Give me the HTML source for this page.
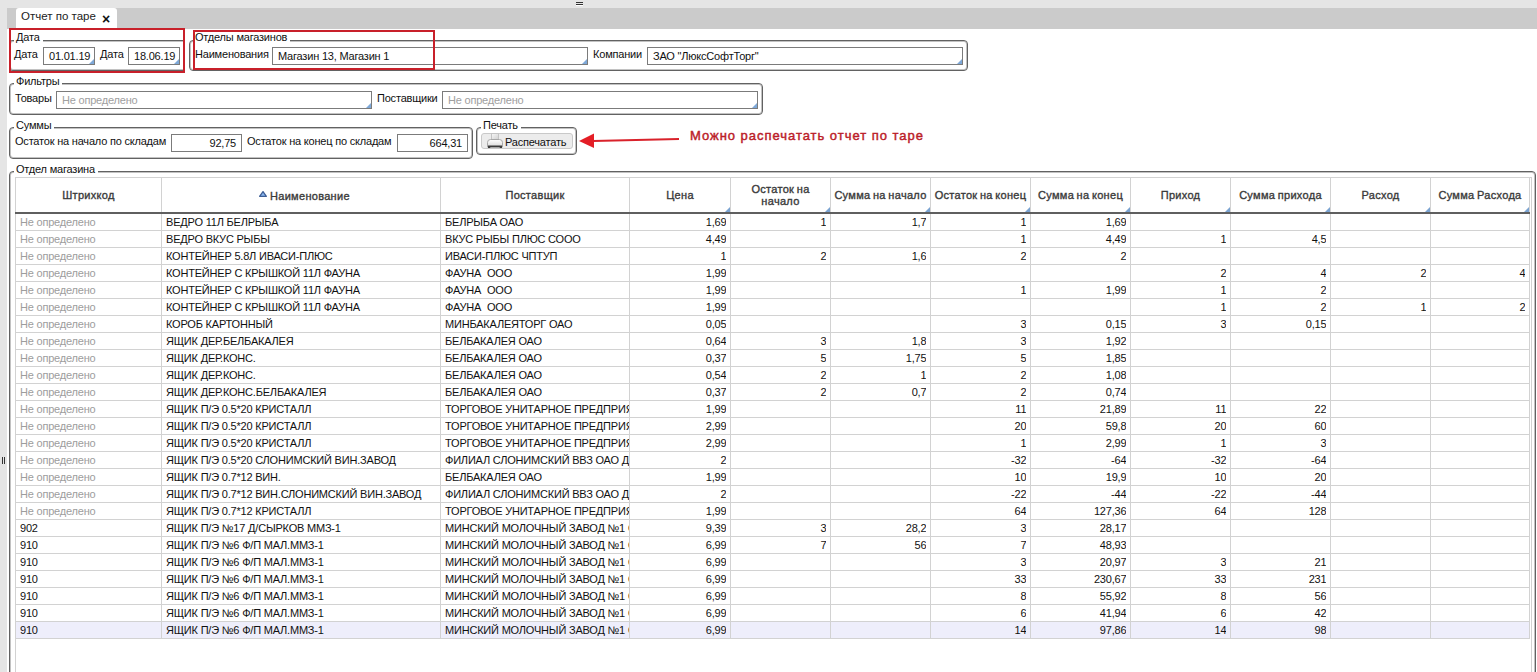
<!DOCTYPE html><html><head><meta charset="utf-8"><style>

*{box-sizing:border-box}
html,body{margin:0;padding:0}
body{width:1537px;height:672px;position:relative;overflow:hidden;background:#fff;font-family:"Liberation Sans",sans-serif;font-size:11px;color:#111;letter-spacing:-0.2px}
.ab{position:absolute}
.fs{position:absolute;border:1px solid #626262;border-radius:4px;box-shadow:inset 0 0 0 1px #c2c2c2}
.lg{position:absolute;background:#fff;padding:0 3px 0 2px;line-height:13px;color:#111}
.lb{position:absolute;line-height:13px;white-space:nowrap;color:#111}
.in{position:absolute;border:1px solid #7b7b7b;height:18px;background:#fff;line-height:16px;padding:0 5px;white-space:nowrap;overflow:hidden;color:#111}
.in.ph{color:#a0a0a0}
.tri{position:absolute;right:0;bottom:0;width:0;height:0;border-left:5px solid transparent;border-bottom:5px solid #7ea8d8}
.red{position:absolute;border:2px solid #c8202a}
.hl{position:absolute;height:1px;background:#d2d2d2}
.vl{position:absolute;width:1px;background:#d2d2d2}
.c{position:absolute;height:16px;line-height:16px;white-space:nowrap;overflow:hidden;color:#111}
.g{color:#9d9d9d}
.hd{position:absolute;color:#3a3a3a;text-align:center;line-height:12px;white-space:nowrap;letter-spacing:0.3px;word-spacing:-0.8px;-webkit-text-stroke:0.35px #3a3a3a}
.htri{position:absolute;width:0;height:0;border-left:5px solid transparent;border-bottom:5px solid #7aa3d1}

</style></head><body>
<div class="ab" style="left:0;top:0;width:1537px;height:8px;background:#e5e5e5"></div>
<div class="ab" style="left:576px;top:2px;width:7px;height:1px;background:#333"></div>
<div class="ab" style="left:576px;top:4px;width:7px;height:1px;background:#333"></div>
<div class="ab" style="left:576px;top:5px;width:7px;height:1px;background:#fff"></div>
<div class="ab" style="left:0;top:0;width:7px;height:672px;background:#e5e5e5"></div>
<div class="ab" style="left:2px;top:457px;width:1px;height:7px;background:#333"></div>
<div class="ab" style="left:4px;top:457px;width:1px;height:7px;background:#333"></div>
<div class="ab" style="left:7px;top:8px;width:1530px;height:21px;background:#cbcbcb"></div>
<div class="ab" style="left:16px;top:8px;width:101px;height:21px;background:#fff;border-radius:3px 3px 0 0"></div>
<div class="lb" style="left:21px;top:10px;font-size:11.5px;color:#222;letter-spacing:0">Отчет по таре</div>
<div class="lb" style="left:102px;top:12.5px;font-size:14px;font-weight:bold;color:#111">×</div>
<div class="fs" style="left:9px;top:40px;width:176px;height:31px;border-right:none;border-radius:4px 0 0 4px"></div>
<div class="lg" style="left:14px;top:31px">Дата</div>
<div class="lb" style="left:14px;top:48px">Дата</div>
<div class="in" style="left:43px;top:47px;width:52px;text-align:left">01.01.19<div class="tri"></div></div>
<div class="lb" style="left:100px;top:48px">Дата</div>
<div class="in" style="left:128px;top:47px;width:52px;text-align:left">18.06.19<div class="tri"></div></div>
<div class="fs" style="left:189px;top:40px;width:779px;height:31px;"></div>
<div class="lg" style="left:193px;top:31px">Отделы магазинов</div>
<div class="lb" style="left:195px;top:48px">Наименования</div>
<div class="in" style="left:272px;top:47px;width:316px;text-align:left">Магазин 13, Магазин 1<div class="tri"></div></div>
<div class="lb" style="left:593px;top:48px">Компании</div>
<div class="in" style="left:647px;top:47px;width:316px;text-align:left">ЗАО "ЛюксСофтТорг"<div class="tri"></div></div>
<div class="fs" style="left:9px;top:83px;width:754px;height:32px;"></div>
<div class="lg" style="left:14px;top:75px">Фильтры</div>
<div class="lb" style="left:15px;top:92px">Товары</div>
<div class="in ph" style="left:56px;top:91px;width:316px;text-align:left">Не определено<div class="tri"></div></div>
<div class="lb" style="left:377px;top:92px">Поставщики</div>
<div class="in ph" style="left:442px;top:91px;width:316px;text-align:left">Не определено<div class="tri"></div></div>
<div class="fs" style="left:9px;top:127px;width:464px;height:32px;"></div>
<div class="lg" style="left:14px;top:119px">Суммы</div>
<div class="lb" style="left:15px;top:135px">Остаток на начало по складам</div>
<div class="in" style="left:171px;top:134px;width:71px;text-align:right">92,75</div>
<div class="lb" style="left:247px;top:135px">Остаток на конец по складам</div>
<div class="in" style="left:397px;top:134px;width:71px;text-align:right">664,31</div>
<div class="fs" style="left:476px;top:127px;width:101px;height:28px;"></div>
<div class="lg" style="left:481px;top:119px">Печать</div>
<div class="ab" style="left:481px;top:133px;width:92px;height:16px;border:1px solid #c9c9c9;border-radius:3px;background:#ececec"></div>
<svg class="ab" style="left:486px;top:133px" width="18" height="16" viewBox="0 0 18 16">
<defs><linearGradient id="pg" x1="0" y1="0" x2="0" y2="1"><stop offset="0" stop-color="#ffffff"/><stop offset="1" stop-color="#d8d8d8"/></linearGradient>
<linearGradient id="pp" x1="0" y1="0" x2="1" y2="1"><stop offset="0" stop-color="#f8f8f8"/><stop offset="1" stop-color="#d0d0d0"/></linearGradient></defs>
<rect x="5.5" y="0.5" width="7" height="6" fill="url(#pp)" stroke="#c4c4c4" stroke-width="1"/>
<path d="M1.5 14 L1.5 9.5 Q1.5 6.5 4.5 6.5 L13.5 6.5 Q16.5 6.5 16.5 9.5 L16.5 14 Z" fill="url(#pg)" stroke="#a8a8a8" stroke-width="1"/>
<path d="M2 12.5 L16 12.5 L16 15 L14 15 L13.5 14.2 L4.5 14.2 L4 15 L2 15 Z" fill="#3c3c3c"/>
</svg>
<div class="lb" style="left:505px;top:136px">Распечатать</div>
<div class="fs" style="left:9px;top:171px;width:1527px;height:530px;"></div>
<div class="lg" style="left:14px;top:163px">Отдел магазина</div>
<div class="red" style="left:9px;top:28px;width:176px;height:45px"></div>
<div class="red" style="left:193px;top:30px;width:242px;height:40px"></div>
<svg class="ab" style="left:575px;top:128px" width="110" height="24" viewBox="0 0 110 24">
<path d="M18 13 L104 11" stroke="#d9222b" stroke-width="2.2" fill="none"/>
<path d="M4 13 L19 5.5 L19 20 Z" fill="#e41e26"/>
</svg>
<div class="lb" style="left:690px;top:129px;font-size:13px;font-weight:normal;color:#bb1d29;letter-spacing:0.97px;-webkit-text-stroke:0.45px #bb1d29">Можно распечатать отчет по таре</div>
<div class="ab" style="left:16px;top:622px;width:1513px;height:16px;background:#eeeefb"></div>
<div class="hl" style="left:15px;top:177px;width:1517px"></div>
<div class="vl" style="left:1531px;top:177px;height:495px"></div>
<div class="vl" style="left:15px;top:177px;height:495px"></div>
<div class="vl" style="left:161px;top:177px;height:462px"></div>
<div class="vl" style="left:440px;top:177px;height:462px"></div>
<div class="vl" style="left:629px;top:177px;height:462px"></div>
<div class="vl" style="left:730px;top:177px;height:462px"></div>
<div class="vl" style="left:830px;top:177px;height:462px"></div>
<div class="vl" style="left:930px;top:177px;height:462px"></div>
<div class="vl" style="left:1030px;top:177px;height:462px"></div>
<div class="vl" style="left:1130px;top:177px;height:462px"></div>
<div class="vl" style="left:1230px;top:177px;height:462px"></div>
<div class="vl" style="left:1330px;top:177px;height:462px"></div>
<div class="vl" style="left:1430px;top:177px;height:462px"></div>
<div class="vl" style="left:1529px;top:177px;height:462px"></div>
<div class="ab" style="left:15px;top:212px;width:1515px;height:2px;background:#5f5f5f"></div>
<div class="hl" style="left:15px;top:230px;width:1515px"></div>
<div class="hl" style="left:15px;top:247px;width:1515px"></div>
<div class="hl" style="left:15px;top:264px;width:1515px"></div>
<div class="hl" style="left:15px;top:281px;width:1515px"></div>
<div class="hl" style="left:15px;top:298px;width:1515px"></div>
<div class="hl" style="left:15px;top:315px;width:1515px"></div>
<div class="hl" style="left:15px;top:332px;width:1515px"></div>
<div class="hl" style="left:15px;top:349px;width:1515px"></div>
<div class="hl" style="left:15px;top:366px;width:1515px"></div>
<div class="hl" style="left:15px;top:383px;width:1515px"></div>
<div class="hl" style="left:15px;top:400px;width:1515px"></div>
<div class="hl" style="left:15px;top:417px;width:1515px"></div>
<div class="hl" style="left:15px;top:434px;width:1515px"></div>
<div class="hl" style="left:15px;top:451px;width:1515px"></div>
<div class="hl" style="left:15px;top:468px;width:1515px"></div>
<div class="hl" style="left:15px;top:485px;width:1515px"></div>
<div class="hl" style="left:15px;top:502px;width:1515px"></div>
<div class="hl" style="left:15px;top:519px;width:1515px"></div>
<div class="hl" style="left:15px;top:536px;width:1515px"></div>
<div class="hl" style="left:15px;top:553px;width:1515px"></div>
<div class="hl" style="left:15px;top:570px;width:1515px"></div>
<div class="hl" style="left:15px;top:587px;width:1515px"></div>
<div class="hl" style="left:15px;top:604px;width:1515px"></div>
<div class="hl" style="left:15px;top:621px;width:1515px"></div>
<div class="hl" style="left:15px;top:638px;width:1515px"></div>
<div class="hd" style="left:16px;top:189px;width:145px;font-weight:normal">Штрихкод</div>
<div class="hd" style="left:270px;top:190px;text-align:left;font-weight:normal">Наименование</div>
<div class="hd" style="left:441px;top:189px;width:188px;font-weight:normal">Поставщик</div>
<div class="hd" style="left:630px;top:189px;width:100px;font-weight:normal">Цена</div>
<div class="htri" style="left:725px;top:207px"></div>
<div class="hd" style="left:731px;top:183px;width:99px;font-weight:normal">Остаток на<br>начало</div>
<div class="htri" style="left:825px;top:207px"></div>
<div class="hd" style="left:831px;top:189px;width:99px;font-weight:normal">Сумма на начало</div>
<div class="htri" style="left:925px;top:207px"></div>
<div class="hd" style="left:931px;top:189px;width:99px;font-weight:normal">Остаток на конец</div>
<div class="htri" style="left:1025px;top:207px"></div>
<div class="hd" style="left:1031px;top:189px;width:99px;font-weight:normal">Сумма на конец</div>
<div class="htri" style="left:1125px;top:207px"></div>
<div class="hd" style="left:1131px;top:189px;width:99px;font-weight:normal">Приход</div>
<div class="htri" style="left:1225px;top:207px"></div>
<div class="hd" style="left:1231px;top:189px;width:99px;font-weight:normal">Сумма прихода</div>
<div class="htri" style="left:1325px;top:207px"></div>
<div class="hd" style="left:1331px;top:189px;width:99px;font-weight:normal">Расход</div>
<div class="htri" style="left:1425px;top:207px"></div>
<div class="hd" style="left:1431px;top:189px;width:98px;font-weight:normal">Сумма Расхода</div>
<div class="htri" style="left:1524px;top:207px"></div>
<svg class="ab" style="left:258px;top:190px" width="10" height="8" viewBox="0 0 10 8"><path d="M1.6 6.3 L5 1.6 L8.4 6.3 Z" fill="#8ab6ee" stroke="#3f5f96" stroke-width="1.3" stroke-linejoin="round"/></svg>
<div class="c g" style="left:20px;top:214px;width:141px">Не определено</div>
<div class="c" style="left:166px;top:214px;width:274px">ВЕДРО 11Л БЕЛРЫБА</div>
<div class="c" style="left:445px;top:214px;width:184px">БЕЛРЫБА ОАО</div>
<div class="c" style="left:630px;top:214px;width:96.4px;text-align:right">1,69</div>
<div class="c" style="left:731px;top:214px;width:95.4px;text-align:right">1</div>
<div class="c" style="left:831px;top:214px;width:95.4px;text-align:right">1,7</div>
<div class="c" style="left:931px;top:214px;width:95.4px;text-align:right">1</div>
<div class="c" style="left:1031px;top:214px;width:95.4px;text-align:right">1,69</div>
<div class="c g" style="left:20px;top:231px;width:141px">Не определено</div>
<div class="c" style="left:166px;top:231px;width:274px">ВЕДРО ВКУС РЫБЫ</div>
<div class="c" style="left:445px;top:231px;width:184px">ВКУС РЫБЫ ПЛЮС СООО</div>
<div class="c" style="left:630px;top:231px;width:96.4px;text-align:right">4,49</div>
<div class="c" style="left:931px;top:231px;width:95.4px;text-align:right">1</div>
<div class="c" style="left:1031px;top:231px;width:95.4px;text-align:right">4,49</div>
<div class="c" style="left:1131px;top:231px;width:95.4px;text-align:right">1</div>
<div class="c" style="left:1231px;top:231px;width:95.4px;text-align:right">4,5</div>
<div class="c g" style="left:20px;top:248px;width:141px">Не определено</div>
<div class="c" style="left:166px;top:248px;width:274px">КОНТЕЙНЕР 5.8Л ИВАСИ-ПЛЮС</div>
<div class="c" style="left:445px;top:248px;width:184px">ИВАСИ-ПЛЮС ЧПТУП</div>
<div class="c" style="left:630px;top:248px;width:96.4px;text-align:right">1</div>
<div class="c" style="left:731px;top:248px;width:95.4px;text-align:right">2</div>
<div class="c" style="left:831px;top:248px;width:95.4px;text-align:right">1,6</div>
<div class="c" style="left:931px;top:248px;width:95.4px;text-align:right">2</div>
<div class="c" style="left:1031px;top:248px;width:95.4px;text-align:right">2</div>
<div class="c g" style="left:20px;top:265px;width:141px">Не определено</div>
<div class="c" style="left:166px;top:265px;width:274px">КОНТЕЙНЕР С КРЫШКОЙ 11Л ФАУНА</div>
<div class="c" style="left:445px;top:265px;width:184px">ФАУНА&nbsp; ООО</div>
<div class="c" style="left:630px;top:265px;width:96.4px;text-align:right">1,99</div>
<div class="c" style="left:1131px;top:265px;width:95.4px;text-align:right">2</div>
<div class="c" style="left:1231px;top:265px;width:95.4px;text-align:right">4</div>
<div class="c" style="left:1331px;top:265px;width:95.4px;text-align:right">2</div>
<div class="c" style="left:1431px;top:265px;width:94.4px;text-align:right">4</div>
<div class="c g" style="left:20px;top:282px;width:141px">Не определено</div>
<div class="c" style="left:166px;top:282px;width:274px">КОНТЕЙНЕР С КРЫШКОЙ 11Л ФАУНА</div>
<div class="c" style="left:445px;top:282px;width:184px">ФАУНА&nbsp; ООО</div>
<div class="c" style="left:630px;top:282px;width:96.4px;text-align:right">1,99</div>
<div class="c" style="left:931px;top:282px;width:95.4px;text-align:right">1</div>
<div class="c" style="left:1031px;top:282px;width:95.4px;text-align:right">1,99</div>
<div class="c" style="left:1131px;top:282px;width:95.4px;text-align:right">1</div>
<div class="c" style="left:1231px;top:282px;width:95.4px;text-align:right">2</div>
<div class="c g" style="left:20px;top:299px;width:141px">Не определено</div>
<div class="c" style="left:166px;top:299px;width:274px">КОНТЕЙНЕР С КРЫШКОЙ 11Л ФАУНА</div>
<div class="c" style="left:445px;top:299px;width:184px">ФАУНА&nbsp; ООО</div>
<div class="c" style="left:630px;top:299px;width:96.4px;text-align:right">1,99</div>
<div class="c" style="left:1131px;top:299px;width:95.4px;text-align:right">1</div>
<div class="c" style="left:1231px;top:299px;width:95.4px;text-align:right">2</div>
<div class="c" style="left:1331px;top:299px;width:95.4px;text-align:right">1</div>
<div class="c" style="left:1431px;top:299px;width:94.4px;text-align:right">2</div>
<div class="c g" style="left:20px;top:316px;width:141px">Не определено</div>
<div class="c" style="left:166px;top:316px;width:274px">КОРОБ КАРТОННЫЙ</div>
<div class="c" style="left:445px;top:316px;width:184px">МИНБАКАЛЕЯТОРГ ОАО</div>
<div class="c" style="left:630px;top:316px;width:96.4px;text-align:right">0,05</div>
<div class="c" style="left:931px;top:316px;width:95.4px;text-align:right">3</div>
<div class="c" style="left:1031px;top:316px;width:95.4px;text-align:right">0,15</div>
<div class="c" style="left:1131px;top:316px;width:95.4px;text-align:right">3</div>
<div class="c" style="left:1231px;top:316px;width:95.4px;text-align:right">0,15</div>
<div class="c g" style="left:20px;top:333px;width:141px">Не определено</div>
<div class="c" style="left:166px;top:333px;width:274px">ЯЩИК ДЕР.БЕЛБАКАЛЕЯ</div>
<div class="c" style="left:445px;top:333px;width:184px">БЕЛБАКАЛЕЯ ОАО</div>
<div class="c" style="left:630px;top:333px;width:96.4px;text-align:right">0,64</div>
<div class="c" style="left:731px;top:333px;width:95.4px;text-align:right">3</div>
<div class="c" style="left:831px;top:333px;width:95.4px;text-align:right">1,8</div>
<div class="c" style="left:931px;top:333px;width:95.4px;text-align:right">3</div>
<div class="c" style="left:1031px;top:333px;width:95.4px;text-align:right">1,92</div>
<div class="c g" style="left:20px;top:350px;width:141px">Не определено</div>
<div class="c" style="left:166px;top:350px;width:274px">ЯЩИК ДЕР.КОНС.</div>
<div class="c" style="left:445px;top:350px;width:184px">БЕЛБАКАЛЕЯ ОАО</div>
<div class="c" style="left:630px;top:350px;width:96.4px;text-align:right">0,37</div>
<div class="c" style="left:731px;top:350px;width:95.4px;text-align:right">5</div>
<div class="c" style="left:831px;top:350px;width:95.4px;text-align:right">1,75</div>
<div class="c" style="left:931px;top:350px;width:95.4px;text-align:right">5</div>
<div class="c" style="left:1031px;top:350px;width:95.4px;text-align:right">1,85</div>
<div class="c g" style="left:20px;top:367px;width:141px">Не определено</div>
<div class="c" style="left:166px;top:367px;width:274px">ЯЩИК ДЕР.КОНС.</div>
<div class="c" style="left:445px;top:367px;width:184px">БЕЛБАКАЛЕЯ ОАО</div>
<div class="c" style="left:630px;top:367px;width:96.4px;text-align:right">0,54</div>
<div class="c" style="left:731px;top:367px;width:95.4px;text-align:right">2</div>
<div class="c" style="left:831px;top:367px;width:95.4px;text-align:right">1</div>
<div class="c" style="left:931px;top:367px;width:95.4px;text-align:right">2</div>
<div class="c" style="left:1031px;top:367px;width:95.4px;text-align:right">1,08</div>
<div class="c g" style="left:20px;top:384px;width:141px">Не определено</div>
<div class="c" style="left:166px;top:384px;width:274px">ЯЩИК ДЕР.КОНС.БЕЛБАКАЛЕЯ</div>
<div class="c" style="left:445px;top:384px;width:184px">БЕЛБАКАЛЕЯ ОАО</div>
<div class="c" style="left:630px;top:384px;width:96.4px;text-align:right">0,37</div>
<div class="c" style="left:731px;top:384px;width:95.4px;text-align:right">2</div>
<div class="c" style="left:831px;top:384px;width:95.4px;text-align:right">0,7</div>
<div class="c" style="left:931px;top:384px;width:95.4px;text-align:right">2</div>
<div class="c" style="left:1031px;top:384px;width:95.4px;text-align:right">0,74</div>
<div class="c g" style="left:20px;top:401px;width:141px">Не определено</div>
<div class="c" style="left:166px;top:401px;width:274px">ЯЩИК П/Э 0.5*20 КРИСТАЛЛ</div>
<div class="c" style="left:445px;top:401px;width:184px">ТОРГОВОЕ УНИТАРНОЕ ПРЕДПРИЯТИЕ</div>
<div class="c" style="left:630px;top:401px;width:96.4px;text-align:right">1,99</div>
<div class="c" style="left:931px;top:401px;width:95.4px;text-align:right">11</div>
<div class="c" style="left:1031px;top:401px;width:95.4px;text-align:right">21,89</div>
<div class="c" style="left:1131px;top:401px;width:95.4px;text-align:right">11</div>
<div class="c" style="left:1231px;top:401px;width:95.4px;text-align:right">22</div>
<div class="c g" style="left:20px;top:418px;width:141px">Не определено</div>
<div class="c" style="left:166px;top:418px;width:274px">ЯЩИК П/Э 0.5*20 КРИСТАЛЛ</div>
<div class="c" style="left:445px;top:418px;width:184px">ТОРГОВОЕ УНИТАРНОЕ ПРЕДПРИЯТИЕ</div>
<div class="c" style="left:630px;top:418px;width:96.4px;text-align:right">2,99</div>
<div class="c" style="left:931px;top:418px;width:95.4px;text-align:right">20</div>
<div class="c" style="left:1031px;top:418px;width:95.4px;text-align:right">59,8</div>
<div class="c" style="left:1131px;top:418px;width:95.4px;text-align:right">20</div>
<div class="c" style="left:1231px;top:418px;width:95.4px;text-align:right">60</div>
<div class="c g" style="left:20px;top:435px;width:141px">Не определено</div>
<div class="c" style="left:166px;top:435px;width:274px">ЯЩИК П/Э 0.5*20 КРИСТАЛЛ</div>
<div class="c" style="left:445px;top:435px;width:184px">ТОРГОВОЕ УНИТАРНОЕ ПРЕДПРИЯТИЕ</div>
<div class="c" style="left:630px;top:435px;width:96.4px;text-align:right">2,99</div>
<div class="c" style="left:931px;top:435px;width:95.4px;text-align:right">1</div>
<div class="c" style="left:1031px;top:435px;width:95.4px;text-align:right">2,99</div>
<div class="c" style="left:1131px;top:435px;width:95.4px;text-align:right">1</div>
<div class="c" style="left:1231px;top:435px;width:95.4px;text-align:right">3</div>
<div class="c g" style="left:20px;top:452px;width:141px">Не определено</div>
<div class="c" style="left:166px;top:452px;width:274px">ЯЩИК П/Э 0.5*20 СЛОНИМСКИЙ ВИН.ЗАВОД</div>
<div class="c" style="left:445px;top:452px;width:184px">ФИЛИАЛ СЛОНИМСКИЙ ВВЗ ОАО ДРИНК</div>
<div class="c" style="left:630px;top:452px;width:96.4px;text-align:right">2</div>
<div class="c" style="left:931px;top:452px;width:95.4px;text-align:right">-32</div>
<div class="c" style="left:1031px;top:452px;width:95.4px;text-align:right">-64</div>
<div class="c" style="left:1131px;top:452px;width:95.4px;text-align:right">-32</div>
<div class="c" style="left:1231px;top:452px;width:95.4px;text-align:right">-64</div>
<div class="c g" style="left:20px;top:469px;width:141px">Не определено</div>
<div class="c" style="left:166px;top:469px;width:274px">ЯЩИК П/Э 0.7*12 ВИН.</div>
<div class="c" style="left:445px;top:469px;width:184px">БЕЛБАКАЛЕЯ ОАО</div>
<div class="c" style="left:630px;top:469px;width:96.4px;text-align:right">1,99</div>
<div class="c" style="left:931px;top:469px;width:95.4px;text-align:right">10</div>
<div class="c" style="left:1031px;top:469px;width:95.4px;text-align:right">19,9</div>
<div class="c" style="left:1131px;top:469px;width:95.4px;text-align:right">10</div>
<div class="c" style="left:1231px;top:469px;width:95.4px;text-align:right">20</div>
<div class="c g" style="left:20px;top:486px;width:141px">Не определено</div>
<div class="c" style="left:166px;top:486px;width:274px">ЯЩИК П/Э 0.7*12 ВИН.СЛОНИМСКИЙ ВИН.ЗАВОД</div>
<div class="c" style="left:445px;top:486px;width:184px">ФИЛИАЛ СЛОНИМСКИЙ ВВЗ ОАО ДРИНК</div>
<div class="c" style="left:630px;top:486px;width:96.4px;text-align:right">2</div>
<div class="c" style="left:931px;top:486px;width:95.4px;text-align:right">-22</div>
<div class="c" style="left:1031px;top:486px;width:95.4px;text-align:right">-44</div>
<div class="c" style="left:1131px;top:486px;width:95.4px;text-align:right">-22</div>
<div class="c" style="left:1231px;top:486px;width:95.4px;text-align:right">-44</div>
<div class="c g" style="left:20px;top:503px;width:141px">Не определено</div>
<div class="c" style="left:166px;top:503px;width:274px">ЯЩИК П/Э 0.7*12 КРИСТАЛЛ</div>
<div class="c" style="left:445px;top:503px;width:184px">ТОРГОВОЕ УНИТАРНОЕ ПРЕДПРИЯТИЕ</div>
<div class="c" style="left:630px;top:503px;width:96.4px;text-align:right">1,99</div>
<div class="c" style="left:931px;top:503px;width:95.4px;text-align:right">64</div>
<div class="c" style="left:1031px;top:503px;width:95.4px;text-align:right">127,36</div>
<div class="c" style="left:1131px;top:503px;width:95.4px;text-align:right">64</div>
<div class="c" style="left:1231px;top:503px;width:95.4px;text-align:right">128</div>
<div class="c" style="left:20px;top:520px;width:141px">902</div>
<div class="c" style="left:166px;top:520px;width:274px">ЯЩИК П/Э №17 Д/СЫРКОВ ММЗ-1</div>
<div class="c" style="left:445px;top:520px;width:184px">МИНСКИЙ МОЛОЧНЫЙ ЗАВОД №1 ОАО</div>
<div class="c" style="left:630px;top:520px;width:96.4px;text-align:right">9,39</div>
<div class="c" style="left:731px;top:520px;width:95.4px;text-align:right">3</div>
<div class="c" style="left:831px;top:520px;width:95.4px;text-align:right">28,2</div>
<div class="c" style="left:931px;top:520px;width:95.4px;text-align:right">3</div>
<div class="c" style="left:1031px;top:520px;width:95.4px;text-align:right">28,17</div>
<div class="c" style="left:20px;top:537px;width:141px">910</div>
<div class="c" style="left:166px;top:537px;width:274px">ЯЩИК П/Э №6 Ф/П МАЛ.ММЗ-1</div>
<div class="c" style="left:445px;top:537px;width:184px">МИНСКИЙ МОЛОЧНЫЙ ЗАВОД №1 ОАО</div>
<div class="c" style="left:630px;top:537px;width:96.4px;text-align:right">6,99</div>
<div class="c" style="left:731px;top:537px;width:95.4px;text-align:right">7</div>
<div class="c" style="left:831px;top:537px;width:95.4px;text-align:right">56</div>
<div class="c" style="left:931px;top:537px;width:95.4px;text-align:right">7</div>
<div class="c" style="left:1031px;top:537px;width:95.4px;text-align:right">48,93</div>
<div class="c" style="left:20px;top:554px;width:141px">910</div>
<div class="c" style="left:166px;top:554px;width:274px">ЯЩИК П/Э №6 Ф/П МАЛ.ММЗ-1</div>
<div class="c" style="left:445px;top:554px;width:184px">МИНСКИЙ МОЛОЧНЫЙ ЗАВОД №1 ОАО</div>
<div class="c" style="left:630px;top:554px;width:96.4px;text-align:right">6,99</div>
<div class="c" style="left:931px;top:554px;width:95.4px;text-align:right">3</div>
<div class="c" style="left:1031px;top:554px;width:95.4px;text-align:right">20,97</div>
<div class="c" style="left:1131px;top:554px;width:95.4px;text-align:right">3</div>
<div class="c" style="left:1231px;top:554px;width:95.4px;text-align:right">21</div>
<div class="c" style="left:20px;top:571px;width:141px">910</div>
<div class="c" style="left:166px;top:571px;width:274px">ЯЩИК П/Э №6 Ф/П МАЛ.ММЗ-1</div>
<div class="c" style="left:445px;top:571px;width:184px">МИНСКИЙ МОЛОЧНЫЙ ЗАВОД №1 ОАО</div>
<div class="c" style="left:630px;top:571px;width:96.4px;text-align:right">6,99</div>
<div class="c" style="left:931px;top:571px;width:95.4px;text-align:right">33</div>
<div class="c" style="left:1031px;top:571px;width:95.4px;text-align:right">230,67</div>
<div class="c" style="left:1131px;top:571px;width:95.4px;text-align:right">33</div>
<div class="c" style="left:1231px;top:571px;width:95.4px;text-align:right">231</div>
<div class="c" style="left:20px;top:588px;width:141px">910</div>
<div class="c" style="left:166px;top:588px;width:274px">ЯЩИК П/Э №6 Ф/П МАЛ.ММЗ-1</div>
<div class="c" style="left:445px;top:588px;width:184px">МИНСКИЙ МОЛОЧНЫЙ ЗАВОД №1 ОАО</div>
<div class="c" style="left:630px;top:588px;width:96.4px;text-align:right">6,99</div>
<div class="c" style="left:931px;top:588px;width:95.4px;text-align:right">8</div>
<div class="c" style="left:1031px;top:588px;width:95.4px;text-align:right">55,92</div>
<div class="c" style="left:1131px;top:588px;width:95.4px;text-align:right">8</div>
<div class="c" style="left:1231px;top:588px;width:95.4px;text-align:right">56</div>
<div class="c" style="left:20px;top:605px;width:141px">910</div>
<div class="c" style="left:166px;top:605px;width:274px">ЯЩИК П/Э №6 Ф/П МАЛ.ММЗ-1</div>
<div class="c" style="left:445px;top:605px;width:184px">МИНСКИЙ МОЛОЧНЫЙ ЗАВОД №1 ОАО</div>
<div class="c" style="left:630px;top:605px;width:96.4px;text-align:right">6,99</div>
<div class="c" style="left:931px;top:605px;width:95.4px;text-align:right">6</div>
<div class="c" style="left:1031px;top:605px;width:95.4px;text-align:right">41,94</div>
<div class="c" style="left:1131px;top:605px;width:95.4px;text-align:right">6</div>
<div class="c" style="left:1231px;top:605px;width:95.4px;text-align:right">42</div>
<div class="c" style="left:20px;top:622px;width:141px">910</div>
<div class="c" style="left:166px;top:622px;width:274px">ЯЩИК П/Э №6 Ф/П МАЛ.ММЗ-1</div>
<div class="c" style="left:445px;top:622px;width:184px">МИНСКИЙ МОЛОЧНЫЙ ЗАВОД №1 ОАО</div>
<div class="c" style="left:630px;top:622px;width:96.4px;text-align:right">6,99</div>
<div class="c" style="left:931px;top:622px;width:95.4px;text-align:right">14</div>
<div class="c" style="left:1031px;top:622px;width:95.4px;text-align:right">97,86</div>
<div class="c" style="left:1131px;top:622px;width:95.4px;text-align:right">14</div>
<div class="c" style="left:1231px;top:622px;width:95.4px;text-align:right">98</div>
</body></html>
